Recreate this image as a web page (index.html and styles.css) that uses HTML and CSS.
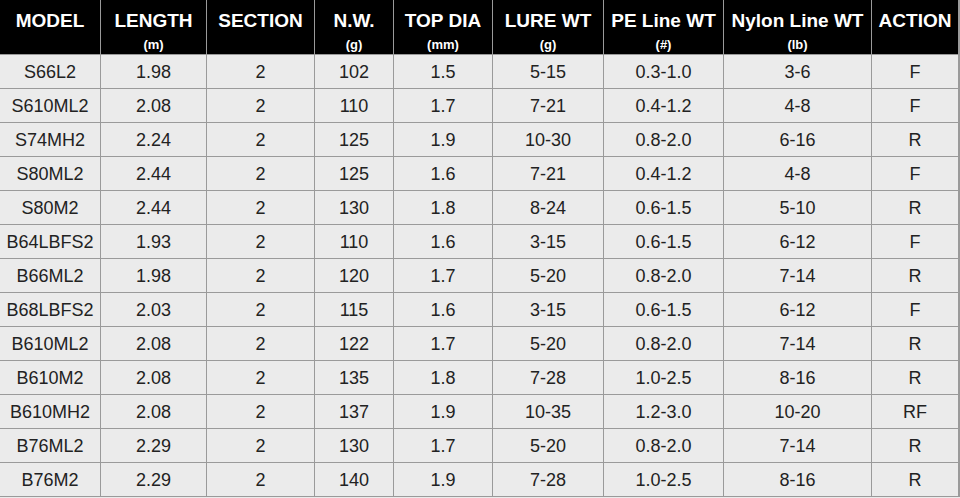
FILE: index.html
```html
<!DOCTYPE html>
<html>
<head>
<meta charset="utf-8">
<link rel="stylesheet" href="styles.css">
</head>
<body>
<div class="spec">
  <div class="hd"><span class="t">MODEL</span></div>
  <div class="hd"><span class="t">LENGTH</span><span class="u">(m)</span></div>
  <div class="hd"><span class="t">SECTION</span></div>
  <div class="hd"><span class="t">N.W.</span><span class="u">(g)</span></div>
  <div class="hd"><span class="t">TOP DIA</span><span class="u">(mm)</span></div>
  <div class="hd"><span class="t">LURE WT</span><span class="u">(g)</span></div>
  <div class="hd"><span class="t">PE Line WT</span><span class="u">(#)</span></div>
  <div class="hd"><span class="t">Nylon Line WT</span><span class="u">(lb)</span></div>
  <div class="hd"><span class="t">ACTION</span></div>

  <div class="c">S66L2</div><div class="c">1.98</div><div class="c">2</div><div class="c">102</div><div class="c">1.5</div><div class="c">5-15</div><div class="c">0.3-1.0</div><div class="c">3-6</div><div class="c">F</div>
  <div class="c">S610ML2</div><div class="c">2.08</div><div class="c">2</div><div class="c">110</div><div class="c">1.7</div><div class="c">7-21</div><div class="c">0.4-1.2</div><div class="c">4-8</div><div class="c">F</div>
  <div class="c">S74MH2</div><div class="c">2.24</div><div class="c">2</div><div class="c">125</div><div class="c">1.9</div><div class="c">10-30</div><div class="c">0.8-2.0</div><div class="c">6-16</div><div class="c">R</div>
  <div class="c">S80ML2</div><div class="c">2.44</div><div class="c">2</div><div class="c">125</div><div class="c">1.6</div><div class="c">7-21</div><div class="c">0.4-1.2</div><div class="c">4-8</div><div class="c">F</div>
  <div class="c">S80M2</div><div class="c">2.44</div><div class="c">2</div><div class="c">130</div><div class="c">1.8</div><div class="c">8-24</div><div class="c">0.6-1.5</div><div class="c">5-10</div><div class="c">R</div>
  <div class="c">B64LBFS2</div><div class="c">1.93</div><div class="c">2</div><div class="c">110</div><div class="c">1.6</div><div class="c">3-15</div><div class="c">0.6-1.5</div><div class="c">6-12</div><div class="c">F</div>
  <div class="c">B66ML2</div><div class="c">1.98</div><div class="c">2</div><div class="c">120</div><div class="c">1.7</div><div class="c">5-20</div><div class="c">0.8-2.0</div><div class="c">7-14</div><div class="c">R</div>
  <div class="c">B68LBFS2</div><div class="c">2.03</div><div class="c">2</div><div class="c">115</div><div class="c">1.6</div><div class="c">3-15</div><div class="c">0.6-1.5</div><div class="c">6-12</div><div class="c">F</div>
  <div class="c">B610ML2</div><div class="c">2.08</div><div class="c">2</div><div class="c">122</div><div class="c">1.7</div><div class="c">5-20</div><div class="c">0.8-2.0</div><div class="c">7-14</div><div class="c">R</div>
  <div class="c">B610M2</div><div class="c">2.08</div><div class="c">2</div><div class="c">135</div><div class="c">1.8</div><div class="c">7-28</div><div class="c">1.0-2.5</div><div class="c">8-16</div><div class="c">R</div>
  <div class="c">B610MH2</div><div class="c">2.08</div><div class="c">2</div><div class="c">137</div><div class="c">1.9</div><div class="c">10-35</div><div class="c">1.2-3.0</div><div class="c">10-20</div><div class="c">RF</div>
  <div class="c">B76ML2</div><div class="c">2.29</div><div class="c">2</div><div class="c">130</div><div class="c">1.7</div><div class="c">5-20</div><div class="c">0.8-2.0</div><div class="c">7-14</div><div class="c">R</div>
  <div class="c">B76M2</div><div class="c">2.29</div><div class="c">2</div><div class="c">140</div><div class="c">1.9</div><div class="c">7-28</div><div class="c">1.0-2.5</div><div class="c">8-16</div><div class="c">R</div>
</div>
</body>
</html>
```
FILE: styles.css
```css
html, body {
  margin: 0;
  padding: 0;
  background: #ebebeb;
}
body {
  width: 960px;
  height: 498px;
  overflow: hidden;
  font-family: "Liberation Sans", Arial, sans-serif;
}
.spec {
  display: grid;
  grid-template-columns: 101px 106px 108px 79px 99px 111px 120px 148px 88px;
  grid-template-rows: 55px repeat(13, 34px);
  width: 960px;
}
.hd {
  background: #000;
  color: #fff;
  display: flex;
  flex-direction: column;
  align-items: center;
  padding-top: 10px;
  box-sizing: border-box;
  border-right: 1px solid #9a9a9a;
  border-bottom: 1px solid #9a9a9a;
}
.hd:nth-child(9n) {
  border-right: 2px solid #9a9a9a;
}
.t {
  font-size: 19px;
  font-weight: bold;
  line-height: 22px;
  white-space: nowrap;
}
.u {
  font-size: 13px;
  font-weight: bold;
  line-height: 14px;
  margin-top: 6px;
}
.c {
  background: #ebebeb;
  color: #222;
  font-size: 18px;
  display: flex;
  align-items: center;
  justify-content: center;
  box-sizing: border-box;
  border-right: 1px solid #9a9a9a;
  border-bottom: 1px solid #9a9a9a;
  padding-top: 1px;
}
.c:nth-child(9n) {
  border-right: 2px solid #9a9a9a;
}
```
